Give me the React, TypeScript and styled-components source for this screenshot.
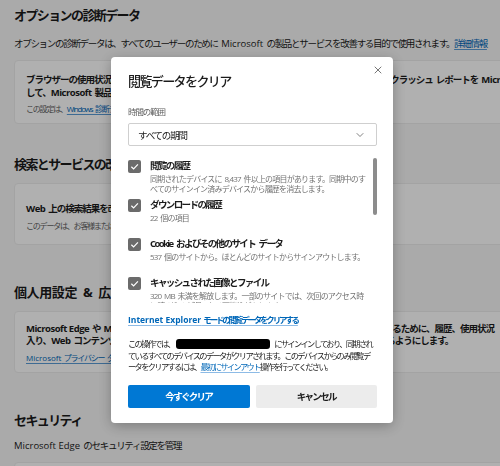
import styled, { createGlobalStyle } from "styled-components";
import { X, ChevronDown } from "lucide-react";

const GlobalStyle = createGlobalStyle`
  html, body {
    margin: 0;
    padding: 0;
  }
  body {
    width: 500px;
    height: 466px;
    overflow: hidden;
    background: #f7f7f7;
    font-family: "Open Sans", "Noto Sans CJK JP", sans-serif;
    color: #1b1b1b;
  }
`;

// latin runs keep their natural spacing inside tightened japanese text
const En = styled.span`
  letter-spacing: 0;
  word-spacing: 0;
`;

const Page = styled.main`
  width: 760px;
  padding: 5px 0 0 14px;
`;

const SectionTitle = styled.h2<{ $gap: number; $ls?: number }>`
  margin: ${(p) => p.$gap}px 0 0;
  font-size: 13px;
  line-height: 20px;
  letter-spacing: ${(p) => p.$ls ?? -1.6}px;
  word-spacing: 3px;
  font-weight: 700;
  white-space: nowrap;
`;

const Lead = styled.p<{ $gap: number }>`
  margin: ${(p) => p.$gap}px 0 0;
  font-size: 9.5px;
  line-height: 14px;
  letter-spacing: -1.3px;
  word-spacing: 2.2px;
  white-space: nowrap;
`;

const Card = styled.section<{ $gap: number; $pad: string }>`
  margin-top: ${(p) => p.$gap}px;
  background: #ffffff;
  border: 1px solid #ececec;
  border-radius: 4px;
  padding: ${(p) => p.$pad};
  display: flex;
  flex-direction: column;
`;

const CardTitle = styled.div`
  font-size: 9.5px;
  line-height: 12.5px;
  letter-spacing: -1px;
  word-spacing: 1.5px;
  font-weight: 700;
  white-space: nowrap;

  ${En} {
    letter-spacing: -0.5px;
  }
`;

const CardNote = styled.div`
  margin-top: 3px;
  font-size: 8px;
  line-height: 13px;
  letter-spacing: -1.2px;
  word-spacing: 1.6px;
  color: #616161;
  white-space: nowrap;
`;

const PageLink = styled.a`
  color: #0067b8;
  text-decoration: underline;
  text-underline-offset: 2px;
  text-decoration-color: #5a9bd5;
`;

const Shade = styled.div`
  position: fixed;
  inset: 0;
  background: rgba(0, 0, 0, 0.31);
`;

const Dialog = styled.div`
  position: fixed;
  left: 111px;
  top: 57px;
  width: 282px;
  box-sizing: border-box;
  padding: 14px 16px 15px 17px;
  background: #ffffff;
  border-radius: 4px;
  box-shadow: 0 3px 14px rgba(0, 0, 0, 0.28);
  display: flex;
  flex-direction: column;
`;

const CloseButton = styled.button`
  position: absolute;
  top: 6px;
  right: 8px;
  width: 14px;
  height: 14px;
  padding: 0;
  border: none;
  background: none;
  color: #3b3b3b;
  display: flex;
  align-items: center;
  justify-content: center;
`;

const DialogTitle = styled.h1`
  margin: 0;
  font-size: 13px;
  line-height: 20px;
  letter-spacing: -1.6px;
  font-weight: 500;
  color: #1b1b1b;
`;

const FieldLabel = styled.div`
  margin-top: 14px;
  font-size: 8.5px;
  line-height: 14px;
  letter-spacing: -1.1px;
  color: #5c5c5c;
`;

const Select = styled.div`
  margin-top: 4px;
  height: 23px;
  box-sizing: border-box;
  border: 1px solid #cfcfcf;
  border-radius: 2px;
  padding: 0 10px 0 9px;
  display: flex;
  align-items: center;
  justify-content: space-between;
  font-size: 9.5px;
  letter-spacing: -1.2px;
  color: #1b1b1b;
`;

const List = styled.div`
  position: relative;
  margin-top: 6px;
  height: 151px;
  padding-top: 6px;
  box-sizing: border-box;
  overflow: hidden;
`;

const Thumb = styled.div`
  position: absolute;
  right: 0;
  top: 6px;
  width: 4px;
  height: 57px;
  border-radius: 2px;
  background: #8c8c8c;
`;

const Item = styled.div`
  height: 39px;
  flex: none;
  display: flex;
  gap: 9px;
`;

const Box = styled.span<{ $on: boolean }>`
  flex: none;
  width: 13px;
  height: 13px;
  margin-top: 1.5px;
  border-radius: 2px;
  box-sizing: border-box;
  background: ${(p) => (p.$on ? "#6b6b6b" : "#ffffff")};
  border: ${(p) => (p.$on ? "none" : "1px solid #6b6b6b")};
  display: flex;
  align-items: center;
  justify-content: center;
`;

const ItemText = styled.div`
  display: flex;
  flex-direction: column;
  min-width: 0;
`;

const ItemTitle = styled.div`
  font-size: 9.5px;
  line-height: 16px;
  letter-spacing: -1.6px;
  word-spacing: 2.6px;
  font-weight: 700;
  color: #1b1b1b;
  white-space: nowrap;
`;

const ItemDesc = styled.div`
  font-size: 8px;
  line-height: 10px;
  letter-spacing: -0.8px;
  word-spacing: 1.4px;
  color: #737373;
  white-space: nowrap;
`;

const ExplorerLink = styled.a`
  margin-top: 10px;
  align-self: flex-start;
  font-size: 8.5px;
  line-height: 14px;
  letter-spacing: -2.2px;
  word-spacing: 2.2px;
  font-weight: 700;
  color: #0067b8;
  text-decoration: underline;
  text-decoration-color: #8dbbe6;
  text-underline-offset: 2px;
`;

const Notice = styled.p`
  margin: 11px 0 0;
  font-size: 8.2px;
  line-height: 11.5px;
  letter-spacing: -1.6px;
  color: #1b1b1b;
  white-space: nowrap;
`;

const Redacted = styled.span`
  display: inline-block;
  width: 94px;
  height: 10px;
  margin: 0 4px 0 2px;
  vertical-align: -2px;
  border-radius: 3px;
  background: #000000;
`;

const InlineLink = styled.a`
  color: #0067b8;
  text-decoration: underline;
  text-decoration-color: #8dbbe6;
  text-underline-offset: 2px;
`;

const Actions = styled.div`
  margin-top: 12px;
  display: grid;
  grid-template-columns: 1fr 1fr;
  gap: 6px;
`;

const Button = styled.button<{ $primary?: boolean }>`
  height: 23px;
  border: none;
  border-radius: 2px;
  font-family: inherit;
  font-size: 9.5px;
  letter-spacing: -1.7px;
  font-weight: 700;
  background: ${(p) => (p.$primary ? "#0078d4" : "#ececec")};
  color: ${(p) => (p.$primary ? "#ffffff" : "#1b1b1b")};
`;

const items = [
  {
    title: "閲覧の履歴",
    desc: [
      "同期されたデバイスに 8,437 件以上の項目があります。同期中のす",
      "べてのサインイン済みデバイスから履歴を消去します。",
    ],
    on: true,
  },
  { title: "ダウンロードの履歴", desc: ["22 個の項目"], on: true },
  {
    title: "Cookie およびその他のサイト データ",
    desc: ["537 個のサイトから。ほとんどのサイトからサインアウトします。"],
    on: true,
  },
  {
    title: "キャッシュされた画像とファイル",
    desc: [
      "320 MB 未満を解放します。一部のサイトでは、次回のアクセス時",
      "に読み込みが遅くなる可能性があります。",
    ],
    on: true,
  },
  { title: "パスワード", desc: ["保存されたパスワード 12 件"], on: false },
  { title: "オートフィル フォーム データ (フォームやカードを含む)", desc: ["なし"], on: false },
];

function Check() {
  return (
    <svg width="9" height="9" viewBox="0 0 10 10">
      <path d="M1.5 5.3 L4 7.8 L8.8 2.6" fill="none" stroke="#ffffff" strokeWidth="1.3" />
    </svg>
  );
}

export default function App() {
  return (
    <>
      <GlobalStyle />
      <Page>
        <SectionTitle $gap={0}>オプションの診断データ</SectionTitle>
        <Lead $gap={12}>
          オプションの診断データは、すべてのユーザーのために <En>Microsoft</En>{" "}
          の製品とサービスを改善する目的で使用されます。<PageLink>詳細情報</PageLink>
        </Lead>
        <Card $gap={9} $pad="13px 11px 8px">
          <CardTitle>
            ブラウザーの使用状況、アクセスしたサイト、パフォーマンスのデータ、閲覧中の問題、およびクラッシュ
            レポートを <En>Microsoft</En> に送信
          </CardTitle>
          <CardTitle>
            して、<En>Microsoft</En> 製品とサービスの改善に役立てます。
          </CardTitle>
          <CardNote>
            この設定は、<PageLink>Windows 診断データ設定</PageLink>によって決まります。
          </CardNote>
        </Card>

        <SectionTitle $gap={30}>検索とサービスの改善</SectionTitle>
        <Card $gap={9} $pad="19px 11px 12px">
          <CardTitle>
            <En>Web</En> 上の検索結果を改善する
          </CardTitle>
          <CardNote>このデータは、お客様または組織を特定するために使用されません。</CardNote>
        </Card>

        <SectionTitle $gap={37} $ls={-0.4}>
          個人用設定 &amp; 広告
        </SectionTitle>
        <Card $gap={9} $pad="11px 11px 8px">
          <CardTitle>
            <En>Microsoft Edge</En> や <En>Microsoft</En>{" "}
            のサービス全体で、お客様のエクスペリエンスをさらに最適化するために、履歴、使用状況
          </CardTitle>
          <CardTitle>
            入り、<En>Web</En>{" "}
            コンテンツ、広告、ニュースなどをお客様の好みに合わせて更にカスタマイズできるようにします。
          </CardTitle>
          <CardNote>
            <PageLink>
              <En>Microsoft</En> プライバシー ダッシュボード
            </PageLink>
          </CardNote>
        </Card>

        <SectionTitle $gap={37}>セキュリティ</SectionTitle>
        <Lead $gap={9}>
          <En>Microsoft Edge</En> のセキュリティ設定を管理
        </Lead>
        <Card $gap={9} $pad="14px 11px">
          <CardTitle>
            <En>Microsoft Defender SmartScreen</En>
          </CardTitle>
        </Card>
      </Page>

      <Shade />

      <Dialog>
        <CloseButton aria-label="閉じる">
          <X size={12} strokeWidth={1.4} />
        </CloseButton>
        <DialogTitle>閲覧データをクリア</DialogTitle>
        <FieldLabel>時間の範囲</FieldLabel>
        <Select>
          <span>すべての期間</span>
          <ChevronDown size={12} strokeWidth={1.4} color="#4a4a4a" />
        </Select>
        <List>
          {items.map((it) => (
            <Item key={it.title}>
              <Box $on={it.on}>{it.on && <Check />}</Box>
              <ItemText>
                <ItemTitle>{it.title}</ItemTitle>
                {it.desc.map((d) => (
                  <ItemDesc key={d}>{d}</ItemDesc>
                ))}
              </ItemText>
            </Item>
          ))}
          <Thumb />
        </List>
        <ExplorerLink>
          <En>Internet Explorer</En> モードの閲覧データをクリアする
        </ExplorerLink>
        <Notice>
          この操作では、
          <Redacted />
          にサインインしており、同期され
          <br />
          ているすべてのデバイスのデータがクリアされます。このデバイスからのみ閲覧デ
          <br />
          ータをクリアするには、<InlineLink>最初にサインアウト</InlineLink>操作を行ってください。
        </Notice>
        <Actions>
          <Button $primary>今すぐクリア</Button>
          <Button>キャンセル</Button>
        </Actions>
      </Dialog>
    </>
  );
}
